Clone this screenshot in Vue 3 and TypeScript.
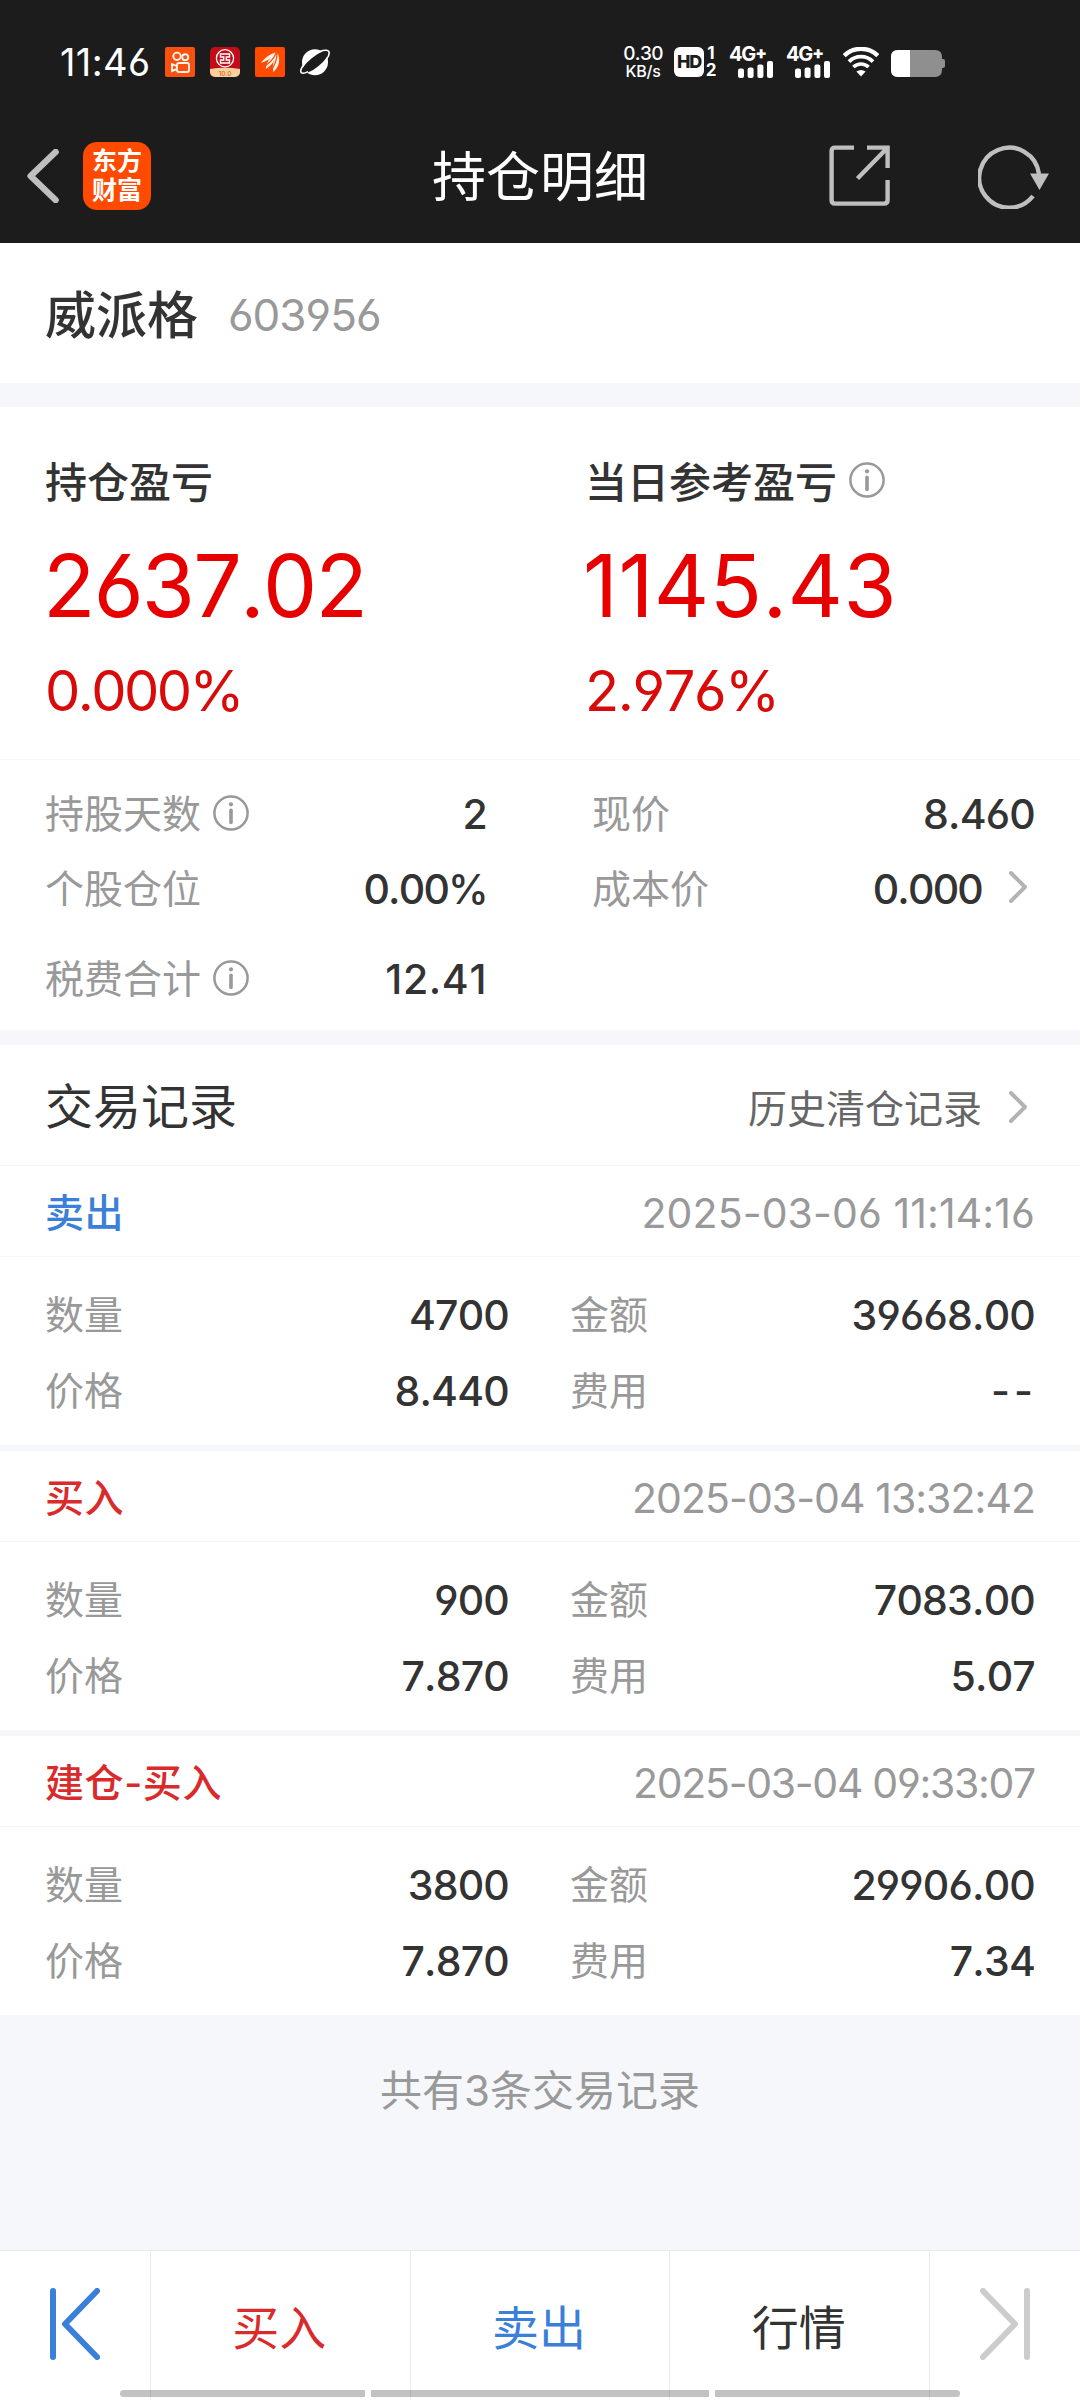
<script setup lang="ts">
interface Trade {
  kind: string
  tone: 'buy' | 'sell'
  time: string
  count: string
  amount: string
  price: string
  fee: string
}

const trades: Trade[] = [
  { kind: '卖出', tone: 'sell', time: '2025-03-06 11:14:16', count: '4700', amount: '39668.00', price: '8.440', fee: '--' },
  { kind: '买入', tone: 'buy', time: '2025-03-04 13:32:42', count: '900', amount: '7083.00', price: '7.870', fee: '5.07' },
  { kind: '建仓-买入', tone: 'buy', time: '2025-03-04 09:33:07', count: '3800', amount: '29906.00', price: '7.870', fee: '7.34' },
]

// The digit 1 is narrow, so lines with many of them are opened up slightly.
function tracking(text: string): string {
  const ones = text.split('1').length - 1
  return `${(-1.3 + ones * 0.35).toFixed(2)}px`
}
</script>

<template>
  <div class="screen">
    <header class="top">
      <div class="status">
        <div class="status-left">
          <span class="clock">11:46</span>
          <svg class="app" viewBox="0 0 30 30">
            <rect width="30" height="30" rx="2" fill="#f9500f" />
            <g fill="none" stroke="#fff3e8" stroke-width="1.9">
              <circle cx="12" cy="9.3" r="3.7" />
              <circle cx="20.2" cy="10.3" r="3" />
              <rect x="12" y="16" width="12" height="9" rx="2" />
              <path d="M12 19.2 L7 17.2 V24 L12 22" />
            </g>
          </svg>
          <svg class="app" viewBox="0 0 30 30">
            <defs>
              <clipPath id="bankClip"><rect width="30" height="30" rx="5" /></clipPath>
            </defs>
            <g clip-path="url(#bankClip)">
              <rect width="30" height="30" fill="#c20d18" />
              <path d="M0 22 Q15 19.5 30 22 V30 H0 Z" fill="#fbd09a" />
            </g>
            <circle cx="15" cy="11.3" r="8.6" fill="none" stroke="#fff" stroke-width="1.3" />
            <path d="M10.5 7 H19.5 V10 H16.3 V13 H19.5 V16 H10.5 V13 H13.7 V10 H10.5 Z" fill="none" stroke="#fff" stroke-width="1.4" />
            <text x="15" y="28.6" text-anchor="middle" font-size="6.4" fill="#c4502c" font-family="Inter, sans-serif">10.0</text>
          </svg>
          <svg class="app" viewBox="0 0 30 30">
            <rect width="30" height="30" rx="2" fill="#ff4a00" />
            <g fill="#fff3e8">
              <path d="M6 15.8 C9 11.5 14 7.5 20.5 5.2 C18.5 9 14 13.5 6 15.8 Z" />
              <path d="M10.8 22 C11 16 15 10 21.5 5.6 C21.6 11 18 17.5 10.8 22 Z" />
              <path d="M18.4 25 C16.6 19 19 11 22.5 6 C25.4 12 24.6 19.5 18.4 25 Z" />
            </g>
            <path d="M8 19.4 C14 17 19 11 21.6 5.4 M15 24.4 C20 19 22 12 22.2 5.6" fill="none" stroke="#ff4a00" stroke-width="1.2" />
          </svg>
          <svg class="app" viewBox="0 0 30 30">
            <circle cx="15" cy="15.3" r="13" fill="#fff" />
            <ellipse cx="15" cy="15.2" rx="17" ry="5.2" transform="rotate(-39 15 15.2)" fill="#1c1c1c" />
            <path d="M20 4.5 C25 2.3 29 3 29.2 5.8 C29.3 8 27.8 10.5 26.3 12.5 M3.6 18 C1 21.5 0.2 24.5 1.3 25.6 C2.4 26.6 5 26.2 8 24.6" fill="none" stroke="#fff" stroke-width="1.6" />
          </svg>
        </div>
        <div class="status-right">
          <div class="speed"><span class="rate">0.30</span><span class="unit">KB/s</span></div>
          <div class="hd">HD</div>
          <div class="sims"><span>1</span><span>2</span></div>
          <div v-for="n in 2" :key="n" class="cell">
            <span class="gen">4G<b>+</b></span>
            <svg width="36" height="17" viewBox="0 0 36 17" fill="#fff">
              <rect x="0" y="7.5" width="6" height="9.5" rx="2" />
              <rect x="9.6" y="6.5" width="6" height="10.5" rx="2" />
              <rect x="19.4" y="3.5" width="6" height="13.5" rx="2" />
              <rect x="29" y="0" width="6" height="17" rx="2" />
            </svg>
          </div>
          <svg class="wifi" viewBox="0 0 36 30" fill="none" stroke="#fff">
            <path d="M1.2 8.7 A24 24 0 0 1 34.8 8.7" stroke-width="4.3" />
            <path d="M6 14.6 A17 17 0 0 1 30 14.6" stroke-width="3.8" />
            <path d="M10.4 20 A11 11 0 0 1 25.6 20" stroke-width="3.6" />
            <path d="M18 29.6 L13.4 24.6 Q18 21.4 22.6 24.6 Z" fill="#fff" stroke="none" />
          </svg>
          <svg class="battery" viewBox="0 0 54 27">
            <path d="M7 0 H44 Q51 0 51 7 V9 H52 Q54 9 54 11 V16 Q54 18 52 18 H51 V20 Q51 27 44 27 H7 Q0 27 0 20 V7 Q0 0 7 0 Z" fill="#8f8f8f" />
            <path d="M7 0 H19 V27 H7 Q0 27 0 20 V7 Q0 0 7 0 Z" fill="#fff" />
          </svg>
        </div>
      </div>
      <div class="nav">
        <div class="nav-side">
          <svg class="back" viewBox="0 0 32 54" fill="none" stroke="#bfbfbf" stroke-width="6.4" stroke-linecap="round" stroke-linejoin="round">
            <path d="M28.6 3 L3.6 27 L28.6 51" />
          </svg>
          <div class="logo"><span>东方</span><span>财富</span></div>
        </div>
        <h1>持仓明细</h1>
        <div class="nav-side right">
          <svg class="share" viewBox="0 0 62 62" fill="none" stroke="#bfbfbf" stroke-width="4.4">
            <path d="M25 2.6 H6 Q2.6 2.6 2.6 6 V55 Q2.6 58.6 6 58.6 H55 Q58.6 58.6 58.6 55 V35" />
            <path d="M38 2.6 H58.6 V23 M58 3.2 L28.5 33.5" />
          </svg>
          <svg class="reload" viewBox="0 0 72 66">
            <path d="M55 53 A30 30 0 1 1 61 31" fill="none" stroke="#bfbfbf" stroke-width="4.4" />
            <path d="M52 30.5 H71 L61.5 47 Z" fill="#bfbfbf" />
          </svg>
        </div>
      </div>
    </header>

    <section class="stock">
      <span class="stock-name">威派格</span>
      <span class="stock-code">603956</span>
    </section>

    <section class="summary">
      <div class="profit">
        <div class="profit-label">持仓盈亏</div>
        <div class="profit-value">2637.02</div>
        <div class="profit-rate">0.000%</div>
      </div>
      <div class="profit today">
        <div class="profit-label">
          当日参考盈亏
          <svg class="info" viewBox="0 0 36 36"><circle cx="18" cy="18" r="16.6" /><path d="M18 15.2 V27.5" /><circle class="dot" cx="18" cy="9.3" r="2.1" /></svg>
        </div>
        <div class="profit-value">1145.43</div>
        <div class="profit-rate">2.976%</div>
      </div>
    </section>

    <section class="details">
      <div class="detail-col left">
        <div class="row">
          <span class="label">持股天数<svg class="info" viewBox="0 0 36 36"><circle cx="18" cy="18" r="16.6" /><path d="M18 15.2 V27.5" /><circle class="dot" cx="18" cy="9.3" r="2.1" /></svg></span>
          <span class="value">2</span>
        </div>
        <div class="row"><span class="label">个股仓位</span><span class="value tight">0.00%</span></div>
        <div class="row last">
          <span class="label">税费合计<svg class="info" viewBox="0 0 36 36"><circle cx="18" cy="18" r="16.6" /><path d="M18 15.2 V27.5" /><circle class="dot" cx="18" cy="9.3" r="2.1" /></svg></span>
          <span class="value open">12.41</span>
        </div>
      </div>
      <div class="detail-col">
        <div class="row"><span class="label">现价</span><span class="value">8.460</span></div>
        <div class="row">
          <span class="label">成本价</span>
          <span class="value tight linked">0.000<svg class="more" viewBox="0 0 20 34"><path d="M3 3 L17 17 L3 31" /></svg></span>
        </div>
      </div>
    </section>

    <section class="records-head">
      <h2>交易记录</h2>
      <a class="history">历史清仓记录<svg class="more" viewBox="0 0 20 34"><path d="M3 3 L17 17 L3 31" /></svg></a>
    </section>

    <article v-for="t in trades" :key="t.time" class="trade">
      <div class="trade-head">
        <span class="kind" :class="t.tone">{{ t.kind }}</span>
        <time :style="{ letterSpacing: tracking(t.time) }">{{ t.time }}</time>
      </div>
      <div class="trade-body">
        <div class="trade-col first">
          <div class="row"><span class="label">数量</span><span class="value">{{ t.count }}</span></div>
          <div class="row"><span class="label">价格</span><span class="value">{{ t.price }}</span></div>
        </div>
        <div class="trade-col">
          <div class="row"><span class="label">金额</span><span class="value">{{ t.amount }}</span></div>
          <div class="row"><span class="label">费用</span><span class="value" :class="{ empty: t.fee === '--' }">{{ t.fee }}</span></div>
        </div>
      </div>
    </article>

    <p class="total">共有3条交易记录</p>

    <footer class="tabs">
      <div class="tab edge">
        <svg class="skip" viewBox="0 0 50 72" fill="none" stroke="#3a80d9" stroke-width="6" stroke-linecap="round" stroke-linejoin="round"><path d="M3 3 V69 M47 3 L15 36 L47 69" /></svg>
      </div>
      <div class="tab buy">买入</div>
      <div class="tab sell">卖出</div>
      <div class="tab">行情</div>
      <div class="tab edge end">
        <svg class="skip" viewBox="0 0 50 72" fill="none" stroke="#cccccc" stroke-width="6" stroke-linecap="round" stroke-linejoin="round"><path d="M47 3 V69 M3 3 L35 36 L3 69" /></svg>
      </div>
      <div class="gesture"><i class="short start"></i><i class="long"></i><i class="short finish"></i></div>
    </footer>
  </div>
</template>

<style>
body {
  margin: 0;
}
</style>

<style scoped>
.screen {
  width: 1080px;
  height: 2400px;
  display: flex;
  flex-direction: column;
  overflow: hidden;
  background: #f6f7fa;
  color: #333;
  font-family: Inter, "Noto Sans CJK SC", sans-serif;
  font-feature-settings: "cv03", "cv04";
  font-kerning: none;
}
svg {
  display: block;
  flex: none;
}
h1,
h2,
p {
  margin: 0;
  font-weight: 400;
}
.top {
  height: 243px;
  background: #1c1c1c;
  color: #fff;
}
.status {
  height: 77px;
  padding: 47px 135px 0 60px;
  box-sizing: border-box;
  display: flex;
  justify-content: space-between;
}
.status-left,
.status-right {
  display: flex;
  height: 30px;
}
.clock {
  width: 105px;
  font-size: 38px;
  line-height: 30px;
  letter-spacing: 0.4px;
  white-space: nowrap;
}
.app {
  width: 30px;
  height: 30px;
  margin-right: 15px;
}
.speed {
  width: 38px;
  margin-right: 12px;
  display: flex;
  flex-direction: column;
  align-items: center;
  white-space: nowrap;
}
.rate {
  font-size: 19px;
  line-height: 14px;
  letter-spacing: -0.7px;
  font-weight: 500;
}
.unit {
  font-size: 16px;
  line-height: 14px;
  margin-top: 3px;
  letter-spacing: -0.2px;
  font-weight: 500;
}
.hd {
  width: 30px;
  height: 30px;
  border-radius: 6px;
  background: #fff;
  color: #1c1c1c;
  font-size: 18px;
  font-weight: 800;
  line-height: 30px;
  text-align: center;
  letter-spacing: -1.2px;
}
.sims {
  width: 12px;
  margin: 0 12px 0 1px;
  display: flex;
  flex-direction: column;
  align-items: center;
  font-size: 17px;
  font-weight: 700;
  line-height: 13px;
  justify-content: space-between;
}
.cell {
  width: 45px;
  margin-right: 12px;
  position: relative;
}
.cell svg {
  margin: -1px 0 0 9px;
}
.gen {
  display: block;
  font-size: 20px;
  font-weight: 700;
  line-height: 15px;
  height: 15px;
  letter-spacing: -1.2px;
  white-space: nowrap;
}
.gen b {
  position: relative;
  top: -2px;
  font-size: 17px;
}
.wifi {
  width: 36px;
  height: 30px;
  margin-right: 12px;
}
.battery {
  width: 54px;
  height: 27px;
  margin-top: 3px;
}
.nav {
  height: 134px;
  margin-top: 32px;
  display: flex;
  align-items: center;
  justify-content: space-between;
}
.nav-side {
  width: 300px;
  display: flex;
  align-items: center;
}
.nav-side.right {
  justify-content: flex-end;
}
.back {
  width: 32px;
  height: 54px;
  margin: 0 24px 0 27px;
}
.logo {
  width: 68px;
  height: 68px;
  border-radius: 14px;
  background: #ff4a00;
  display: flex;
  flex-direction: column;
  align-items: center;
  justify-content: center;
  font-size: 25px;
  font-weight: 700;
  line-height: 29px;
}
h1 {
  font-size: 54px;
  line-height: 60px;
  padding-top: 3px;
}
.share {
  width: 62px;
  height: 62px;
}
.reload {
  width: 72px;
  height: 66px;
  margin: 0 30px 0 87px;
}
.nav-side.right svg {
  margin-top: -1px;
}
.stock {
  height: 140px;
  margin-bottom: 24px;
  padding-left: 45px;
  display: flex;
  align-items: center;
  background: #fff;
}
.stock-name {
  font-size: 51px;
  font-weight: 500;
  margin-top: 5px;
  line-height: 60px;
}
.stock-code {
  margin: 4px 0 0 30px;
  font-size: 44px;
  line-height: 60px;
  letter-spacing: -1px;
  color: #999;
}
.summary {
  height: 352px;
  display: flex;
  background: #fff;
  border-bottom: 1px solid #f5f6f8;
}
.profit {
  width: 495px;
  padding-left: 45px;
}
.profit-label {
  height: 60px;
  margin-top: 42px;
  display: flex;
  align-items: center;
  font-size: 42px;
  font-weight: 500;
}
.profit-label .info {
  margin: 1px 0 0 12px;
}
.profit-value {
  margin: 27px 0 0 -2px;
  height: 100px;
  font-size: 86px;
  line-height: 100px;
  letter-spacing: -1.8px;
  color: #e60000;
}
.profit-rate {
  margin-top: 15px;
  height: 80px;
  font-size: 56px;
  line-height: 80px;
  letter-spacing: -2.6px;
  color: #d90a0a;
}
.today .profit-value {
  letter-spacing: 0.4px;
}
.today .profit-rate {
  letter-spacing: -1.4px;
}
.info {
  width: 36px;
  height: 36px;
  fill: none;
  stroke: #999;
  stroke-width: 2.5;
}
.info path {
  stroke-width: 3.6;
  stroke-linecap: round;
}
.info .dot {
  fill: #999;
  stroke: none;
}
.details {
  height: 270px;
  margin-bottom: 15px;
  display: flex;
  justify-content: space-between;
  padding: 0 45px;
  background: #fff;
}
.detail-col {
  width: 442px;
  padding-top: 16px;
}
.row {
  height: 75px;
  display: flex;
  justify-content: space-between;
  align-items: center;
}
.detail-col.left .row.last {
  margin-top: 15px;
}
.label {
  display: flex;
  align-items: center;
  font-size: 39px;
  line-height: 60px;
  color: #999;
  margin-left: -1px;
}
.left .label,
.first .label {
  margin-left: 0;
}
.label .info {
  margin: -2px 0 0 12px;
}
.value {
  font-size: 41px;
  line-height: 60px;
  font-weight: 500;
  letter-spacing: -0.8px;
}
.value.tight {
  letter-spacing: -1.8px;
}
.value.open {
  letter-spacing: 0.6px;
}
.value.linked {
  display: flex;
  align-items: center;
}
.value.empty {
  letter-spacing: 4px;
  margin-right: -2px;
}
.more {
  width: 20px;
  height: 34px;
  margin: -3px 7px 0 26px;
  fill: none;
  stroke: #b3b3b3;
  stroke-width: 4;
  stroke-linecap: round;
  stroke-linejoin: round;
}
.records-head {
  height: 120px;
  padding: 0 45px;
  display: flex;
  align-items: center;
  justify-content: space-between;
  background: #fff;
  border-bottom: 1px solid #f5f6f8;
}
h2 {
  font-size: 48px;
  line-height: 60px;
  font-weight: 400;
  margin-top: 3px;
}
.history {
  display: flex;
  align-items: center;
  font-size: 39px;
  line-height: 60px;
  color: #666;
  margin-top: 7px;
}
.history .more {
  margin-top: -3px;
}
.trade {
  height: 279px;
  background: #fff;
  border-bottom: 6px solid #f6f7fa;
}
.trade-head {
  height: 91px;
  padding: 4px 45px 0;
  box-sizing: border-box;
  display: flex;
  align-items: center;
  justify-content: space-between;
  border-bottom: 1px solid #f5f6f8;
}
.kind {
  font-size: 39px;
  font-weight: 500;
  line-height: 60px;
  letter-spacing: 0.6px;
}
.buy {
  color: #d92b2b;
}
.sell {
  color: #3a80d9;
}
time {
  font-size: 41px;
  line-height: 60px;
  margin-top: -1px;
  color: #999;
}
.trade-body {
  display: flex;
  justify-content: space-between;
  padding: 20px 45px 0;
}
.trade-col {
  width: 464px;
}
.trade-body .row {
  height: 76px;
}
.total {
  margin-top: 40px;
  height: 60px;
  line-height: 60px;
  font-size: 42px;
  text-align: center;
  color: #999;
}
.tabs {
  margin-top: auto;
  height: 149px;
  border-top: 1px solid #e8eaed;
  display: flex;
  background: #fff;
  position: relative;
}
.tab {
  flex: 1;
  border-left: 1px solid #ebebee;
  font-size: 47px;
  line-height: 153px;
  text-align: center;
  text-indent: -2px;
}
.tab.edge {
  flex: none;
  width: 150px;
  border-left: 0;
  display: flex;
  justify-content: center;
}
.tab.end {
  border-left: 1px solid #ebebee;
}
.skip {
  width: 50px;
  height: 72px;
  margin-top: 37px;
}
.gesture {
  position: absolute;
  left: 120px;
  bottom: 3px;
  display: flex;
  gap: 6px;
}
.gesture i {
  height: 7px;
  background: rgba(0, 0, 0, 0.24);
}
.short {
  width: 245px;
}
.long {
  width: 338px;
}
.start {
  border-radius: 4px 0 0 4px;
}
.finish {
  border-radius: 0 4px 4px 0;
}
</style>
